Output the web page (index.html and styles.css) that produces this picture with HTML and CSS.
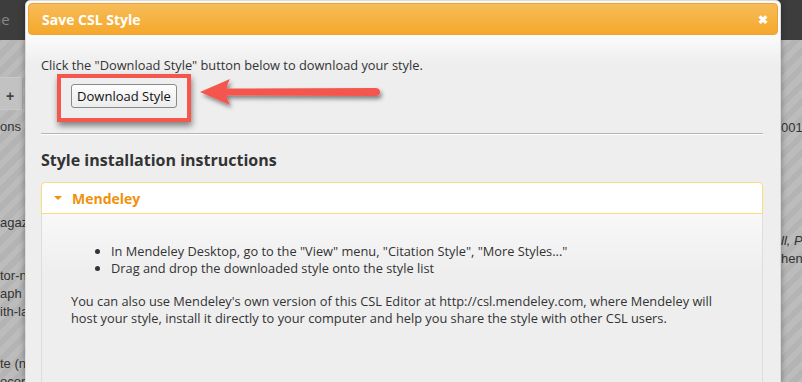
FILE: index.html
```html
<!doctype html>
<html lang="en">
  <head>
    <meta charset="UTF-8" />
    <meta name="viewport" content="width=device-width, initial-scale=1.0" />
    <title>Save CSL Style</title>
    <link rel="stylesheet" href="styles.css">
  </head>
  <body>
    <div class="page">
      <div class="topbar"><span class="topbar-text">ne</span></div>
      <div class="workspace">
        <div class="side side-left">
          <div class="toolbar"><span class="plus">+</span></div>
          <p class="frag frag-ons">ons</p>
          <p class="frag frag-agaz">agaz</p>
          <p class="frag frag-tor">tor-ne</p>
          <p class="frag">aph</p>
          <p class="frag">ith-la</p>
          <p class="frag frag-te">te (n</p>
          <p class="frag">ocors</p>
        </div>
        <div class="side side-right">
          <p class="frag frag-001">001.</p>
          <p class="frag frag-ll"><em>ll, P</em></p>
          <p class="frag">hen</p>
        </div>
      </div>
    </div>

    <div class="dialog">
      <div class="dialog-title">
        <span>Save CSL Style</span>
        <span class="close">&#x2716;</span>
      </div>
      <div class="dialog-body">
        <p class="intro">Click the "Download Style" button below to download your style.</p>
        <div class="download-row">
          <div class="highlight">
            <button class="button">Download Style</button>
          </div>
          <svg class="arrow" width="200" height="40" viewBox="0 0 200 40">
            <defs>
              <filter id="shadow" x="-10%" y="-30%" width="120%" height="180%">
                <feDropShadow dx="2" dy="3" stdDeviation="2" flood-color="#000" flood-opacity="0.45"/>
              </filter>
            </defs>
            <g filter="url(#shadow)" fill="#f4574d">
              <path d="M3 17 L33 4 Q29 12 30 13.5 L178 13 Q183 13 183 17 Q183 21 178 21 L30 20.5 Q29 22 33 30 Z"/>
            </g>
          </svg>
        </div>
        <hr class="rule">
        <h2 class="section-title">Style installation instructions</h2>
        <div class="accordion">
          <div class="accordion-head">
            <span class="caret"></span>
            <span>Mendeley</span>
          </div>
          <div class="accordion-body">
            <ul class="steps">
              <li>In Mendeley Desktop, go to the "View" menu, "Citation Style", "More Styles..."</li>
              <li>Drag and drop the downloaded style onto the style list</li>
            </ul>
            <p class="note">You can also use Mendeley's own version of this CSL Editor at http://csl.mendeley.com, where Mendeley will host your style, install it directly to your computer and help you share the style with other CSL users.</p>
          </div>
        </div>
      </div>
    </div>
  </body>
</html>
```

FILE: styles.css
```css
* {
  margin: 0;
  padding: 0;
  box-sizing: border-box;
}

body {
  width: 802px;
  height: 382px;
  overflow: hidden;
  position: relative;
  font-family: "Open Sans", sans-serif;
  font-size: 12.8px;
  color: #333;
  background: repeating-linear-gradient(
    135deg,
    #b4b4b4 0px,
    #b4b4b4 6px,
    #bcbcbc 6px,
    #bcbcbc 12px
  );
}

/* page behind the dialog */

.page {
  height: 100%;
}

.topbar {
  height: 40px;
  background: #3d3d3d;
  color: #888;
  font-size: 15px;
  padding-top: 9px;
}

.topbar-text {
  margin-left: -8px;
}

.workspace {
  display: flex;
  justify-content: space-between;
  font-family: "Liberation Sans", sans-serif;
  font-size: 13px;
  color: #333;
}

.side {
  width: 25px;
  overflow: hidden;
  white-space: nowrap;
}

.side-left {
  width: 25px;
}

.side-right {
  width: 21px;
  padding-top: 79px;
}

.toolbar {
  margin-top: 37px;
  height: 33px;
  border-top: 1px solid #c8c8c8;
  border-bottom: 1px solid #c8c8c8;
  border-right: 1px solid #a8a8a8;
  width: 23px;
  background: #c2c2c2;
  padding: 10px 0 0 6px;
  font-weight: bold;
  font-size: 14px;
  color: #444;
}

.frag {
  line-height: 18px;
}

.frag-ons {
  margin-top: 8px;
}

.frag-agaz {
  margin-top: 78px;
}

.frag-tor {
  margin-top: 35px;
}

.frag-te {
  margin-top: 34px;
}

.frag-ll {
  margin-top: 95px;
}

/* dialog */

.dialog {
  position: absolute;
  left: 25px;
  top: 0;
  width: 756px;
  height: 400px;
  background: linear-gradient(#fafafa 36px, #eeeeee 64px, #eeeeee);
  border-radius: 5px 5px 0 0;
  border: 1px solid #dcdcdc;
  box-shadow: 0 0 6px rgba(0, 0, 0, 0.35);
  padding: 2px;
}

.dialog-title {
  height: 32px;
  display: flex;
  align-items: center;
  justify-content: space-between;
  padding: 0 9px 0 13px;
  background: linear-gradient(#f7bc58, #f5a82b);
  border: 1px solid #eba237;
  border-radius: 4px;
  color: #fff;
  font-weight: bold;
  font-size: 14px;
}

.close {
  font-size: 12px;
}

.dialog-body {
  padding: 21px 15px 0 13px;
}

.intro {
  line-height: 18px;
}

.download-row {
  position: relative;
  padding: 0 0 0 16px;
  height: 59px;
}

.highlight {
  display: inline-block;
  border: 4px solid #f4574d;
  padding: 6px 10px 10px 10px;
  box-shadow: 1px 4px 6px rgba(0, 0, 0, 0.45);
}

.button {
  width: 106px;
  height: 24px;
  font-family: "Open Sans", sans-serif;
  font-size: 13px;
  color: #111;
  background: linear-gradient(#fdfdfd, #ececec);
  border: 1px solid #8a8a8a;
  border-radius: 3px;
}

.arrow {
  position: absolute;
  left: 156px;
  top: 1px;
}

.rule {
  border: none;
  border-top: 1px solid #b5b5b5;
  border-bottom: 1px solid #fff;
  margin: 0 0 0 0;
}

.section-title {
  font-size: 16px;
  font-weight: bold;
  color: #333;
  margin: 14px 0 11px;
}

.accordion-head {
  height: 32px;
  display: flex;
  align-items: center;
  gap: 10px;
  padding-left: 12px;
  background: #fff;
  border: 1px solid #f9dc7c;
  border-radius: 4px 4px 0 0;
  color: #f0920c;
  font-weight: bold;
  font-size: 14px;
}

.caret {
  width: 0;
  height: 0;
  border-left: 4px solid transparent;
  border-right: 4px solid transparent;
  border-top: 4px solid #f0920c;
}

.accordion-body {
  height: 200px;
  background: linear-gradient(#f8f8f8, #eeeeee 60px);
  border: 1px solid #dedede;
  border-top: none;
  padding: 29px 29px 0 29px;
  line-height: 17px;
}

.steps {
  padding-left: 40px;
  margin-bottom: 16px;
}

.note {
  line-height: 17px;
}
```
